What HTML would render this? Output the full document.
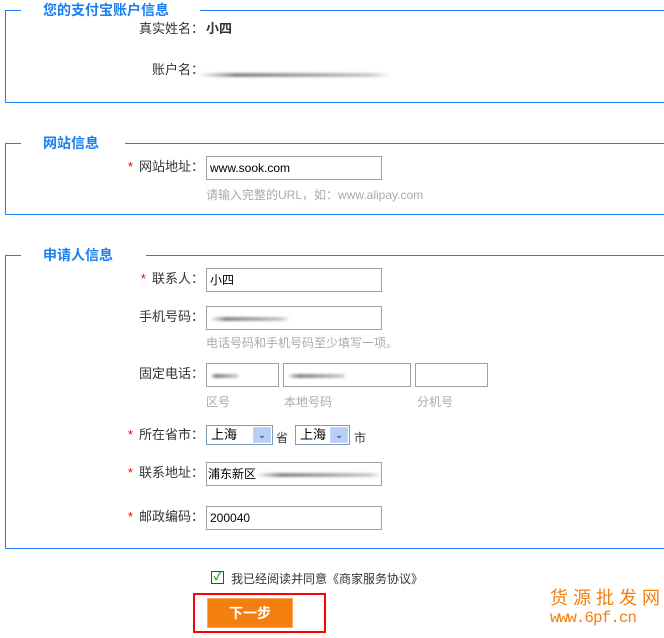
<!DOCTYPE html>
<html><head><meta charset="utf-8"><style>
body{margin:0;width:664px;height:638px;background:#fff;position:relative;overflow:hidden;font-family:"Liberation Sans","Noto Sans CJK SC","WenQuanYi Zen Hei",sans-serif;font-size:13px;color:#333}
.a{position:absolute;white-space:nowrap}
.ln{position:absolute;background:#1a7ff0}
.lg{position:absolute;color:#1a7ff0;font-weight:bold;font-size:14px;line-height:18px}
.lb{position:absolute;width:196px;left:8px;text-align:right;line-height:16px;white-space:nowrap}
.st{color:#e00;margin-right:6px}
.in{position:absolute;border:1px solid #a0a0a0;background:#fff;box-sizing:border-box;height:24px;font-size:12px;line-height:22px;padding-left:3px;color:#000;white-space:nowrap;overflow:hidden}
.h{position:absolute;color:#aaa;font-size:12px;white-space:nowrap}
.blur{display:inline-block;height:4px;background:linear-gradient(90deg,#fff,#888 20%,#aaa 60%,#ccc 90%,#fff);filter:blur(1px);vertical-align:middle}
.sel{position:absolute;border:1px solid #7f9db9;height:20px;box-sizing:border-box;font-size:13px;line-height:18px;padding-left:4px;color:#000;white-space:nowrap}
.sel b{position:absolute;right:1px;top:1px;width:18px;height:16px;background:#b8cdf7;border:1px solid #c6d6f5;box-sizing:border-box;color:#4d6185;font-size:9px;text-align:center;line-height:14px}
</style></head><body>
<div class="ln" style="left:5px;top:10px;width:16px;height:1px"></div>
<div class="ln" style="left:200px;top:10px;width:464px;height:1px"></div>
<div class="ln" style="left:5px;top:10px;width:1px;height:93px"></div>
<div class="ln" style="left:5px;top:102px;width:659px;height:1px"></div>
<div class="lg" style="left:43px;top:1px">您的支付宝账户信息</div>
<div class="lb" style="top:21px">真实姓名：</div>
<div class="a" style="left:206px;top:21px;font-weight:bold;line-height:16px">小四</div>
<div class="lb" style="top:62px">账户名：</div>
<div class="a" style="left:198px;top:66px"><span class="blur" style="width:192px"></span></div>
<div class="ln" style="left:5px;top:143px;width:16px;height:1px"></div>
<div class="ln" style="left:125px;top:143px;width:539px;height:1px"></div>
<div class="ln" style="left:5px;top:143px;width:1px;height:72px"></div>
<div class="ln" style="left:5px;top:214px;width:659px;height:1px"></div>
<div class="lg" style="left:43px;top:134px">网站信息</div>
<div class="lb" style="top:159px"><span class="st">*</span>网站地址：</div>
<div class="in" style="left:206px;top:156px;width:176px">www.sook.com</div>
<div class="h" style="left:206px;top:186px">请输入完整的URL，如：www.alipay.com</div>
<div class="ln" style="left:5px;top:255px;width:16px;height:1px"></div>
<div class="ln" style="left:146px;top:255px;width:518px;height:1px"></div>
<div class="ln" style="left:5px;top:255px;width:1px;height:294px"></div>
<div class="ln" style="left:5px;top:548px;width:659px;height:1px"></div>
<div class="lg" style="left:43px;top:246px">申请人信息</div>
<div class="lb" style="top:271px"><span class="st">*</span>联系人：</div>
<div class="in" style="left:206px;top:268px;width:176px">小四</div>
<div class="lb" style="top:309px">手机号码：</div>
<div class="in" style="left:206px;top:306px;width:176px"><span class="blur" style="width:80px"></span></div>
<div class="h" style="left:206px;top:334px">电话号码和手机号码至少填写一项。</div>
<div class="lb" style="top:366px">固定电话：</div>
<div class="in" style="left:206px;top:363px;width:73px"><span class="blur" style="width:30px"></span></div>
<div class="in" style="left:283px;top:363px;width:128px"><span class="blur" style="width:60px"></span></div>
<div class="in" style="left:415px;top:363px;width:73px"></div>
<div class="h" style="left:206px;top:393px">区号</div>
<div class="h" style="left:284px;top:393px">本地号码</div>
<div class="h" style="left:417px;top:393px">分机号</div>
<div class="lb" style="top:427px"><span class="st">*</span>所在省市：</div>
<div class="sel" style="left:206px;top:425px;width:67px">上海<b>&#8964;</b></div>
<div class="a" style="left:276px;top:429px;font-size:12px">省</div>
<div class="sel" style="left:295px;top:425px;width:55px">上海<b>&#8964;</b></div>
<div class="a" style="left:354px;top:429px;font-size:12px">市</div>
<div class="lb" style="top:465px"><span class="st">*</span>联系地址：</div>
<div class="in" style="left:206px;top:462px;width:176px;padding-left:1px">浦东新区<span class="blur" style="width:126px"></span></div>
<div class="lb" style="top:509px"><span class="st">*</span>邮政编码：</div>
<div class="in" style="left:206px;top:506px;width:176px">200040</div>
<div class="a" style="left:211px;top:571px;width:11px;height:11px;border:1px solid #1c5180;background:#fff;color:#21a121;font-size:11px;line-height:11px;text-align:center;font-weight:bold">✓</div>
<div class="a" style="left:231px;top:570px;font-size:12px">我已经阅读并同意《商家服务协议》</div>
<div class="a" style="left:193px;top:593px;width:129px;height:36px;border:2px solid #f00"></div>
<div class="a" style="left:207px;top:598px;width:86px;height:30px;background:#f47f0e;border:1px solid #f9a95a;box-sizing:border-box;color:#fff;font-weight:bold;font-size:14px;text-align:center;line-height:28px">下一步</div>
<div class="a" style="left:550px;top:584px;color:#f47f0e;font-size:18px;letter-spacing:5px">货源批发网</div>
<div class="a" style="left:550px;top:609px;color:#f47f0e;font-size:16px;font-family:'Liberation Mono',monospace;letter-spacing:-1px">www.6pf.cn</div>
</body></html>
